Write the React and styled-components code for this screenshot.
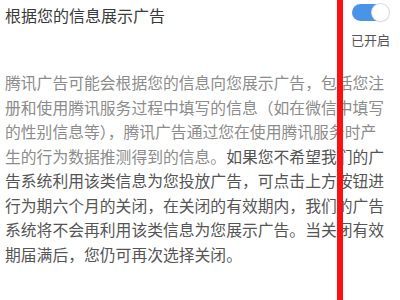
import React from "react";
import styled, { createGlobalStyle } from "styled-components";

const Global = createGlobalStyle`
  html, body { margin: 0; padding: 0; background: #ffffff; }
  body { font-family: "Noto Sans CJK SC", "Noto Sans", sans-serif; }
`;

const Page = styled.div`
  position: relative;
  width: 400px;
  height: 300px;
  overflow: hidden;
  background: #ffffff;
  padding: 3px 10px 0 5px;
  box-sizing: border-box;
`;

const Header = styled.div`
  display: flex;
  justify-content: space-between;
  align-items: flex-start;
`;

const Title = styled.div`
  font-size: 16px;
  line-height: 24px;
  color: #3a3a3a;
`;

const Side = styled.div`
  display: flex;
  flex-direction: column;
  align-items: center;
  padding-top: 1px;
`;

const Toggle = styled.div`
  width: 37px;
  height: 17px;
  border-radius: 9px;
  background: #4a94e8;
  display: flex;
  justify-content: flex-end;
  align-items: center;
  padding: 0 1px;
  box-sizing: border-box;
`;

const Knob = styled.div`
  width: 17px;
  height: 17px;
  border-radius: 50%;
  background: #ffffff;
  box-shadow: 0 0 0 1px #d6dde6, 0 1px 2px rgba(0, 0, 0, 0.15);
  margin-right: -1px;
`;

const Label = styled.div`
  margin-top: 11px;
  font-size: 13px;
  line-height: 16px;
  color: #555555;
`;

const Body = styled.div`
  margin-top: 23px;
  font-size: 15.8px;
  line-height: 24.5px;
  letter-spacing: 0;
`;

const Line = styled.div`
  white-space: nowrap;
`;

const Part = styled.span`
  color: ${(p) => (p.$strong ? "#555555" : "#8c8c8c")};
`;

const Marker = styled.div`
  position: absolute;
  top: 0;
  bottom: 0;
  left: 337px;
  width: 6px;
  background: #ff1010;
`;

export default function App() {
  return (
    <>
      <Global />
      <Page>
        <Header>
          <Title>根据您的信息展示广告</Title>
          <Side>
            <Toggle>
              <Knob />
            </Toggle>
            <Label>已开启</Label>
          </Side>
        </Header>
        <Body>
          <Line><Part>腾讯广告可能会根据您的信息向您展示广告，包括您注</Part></Line>
          <Line><Part>册和使用腾讯服务过程中填写的信息（如在微信中填写</Part></Line>
          <Line><Part>的性别信息等），腾讯广告通过您在使用腾讯服务时产</Part></Line>
          <Line>
            <Part>生的行为数据推测得到的信息。</Part>
            <Part $strong>如果您不希望我们的广</Part>
          </Line>
          <Line><Part $strong>告系统利用该类信息为您投放广告，可点击上方按钮进</Part></Line>
          <Line><Part $strong>行为期六个月的关闭，在关闭的有效期内，我们的广告</Part></Line>
          <Line><Part $strong>系统将不会再利用该类信息为您展示广告。当关闭有效</Part></Line>
          <Line><Part $strong>期届满后，您仍可再次选择关闭。</Part></Line>
        </Body>
        <Marker />
      </Page>
    </>
  );
}
